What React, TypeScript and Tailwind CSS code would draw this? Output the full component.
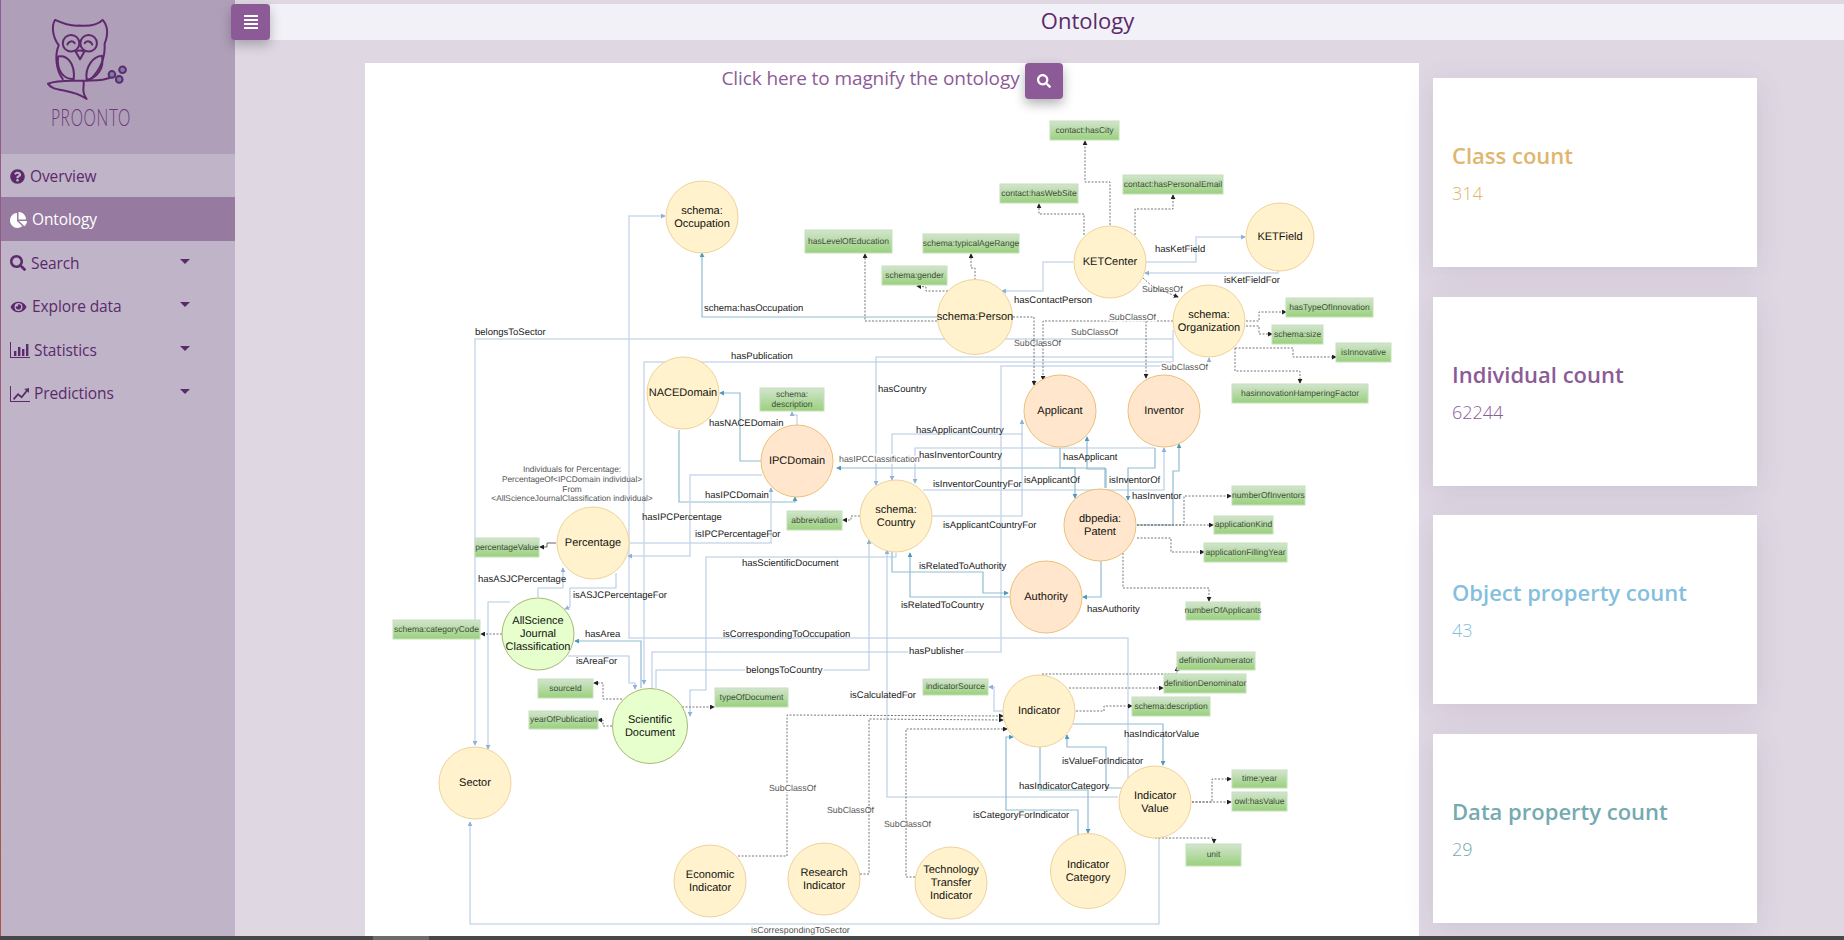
import { FaQuestionCircle, FaChartPie, FaSearch, FaEye, FaAlignJustify } from 'react-icons/fa'
import type { ReactNode } from 'react'

type Tone = 'teal' | 'light' | 'mid' | 'dash' | 'solid'

const nodes: { x: number; y: number; r?: number; fill?: 'peach' | 'green'; text: string[] }[] = [
  { x: 702, y: 217, text: ['schema:', 'Occupation'] },
  { x: 683, y: 393, text: ['NACEDomain'] },
  { x: 797, y: 461, fill: 'peach', text: ['IPCDomain'] },
  { x: 1110, y: 262, text: ['KETCenter'] },
  { x: 1280, y: 237, r: 34, text: ['KETField'] },
  { x: 975, y: 317, r: 37.5, text: ['schema:Person'] },
  { x: 1209, y: 321, text: ['schema:', 'Organization'] },
  { x: 1060, y: 411, fill: 'peach', text: ['Applicant'] },
  { x: 1164, y: 411, fill: 'peach', text: ['Inventor'] },
  { x: 1100, y: 525, fill: 'peach', text: ['dbpedia:', 'Patent'] },
  { x: 896, y: 516, text: ['schema:', 'Country'] },
  { x: 1046, y: 597, fill: 'peach', text: ['Authority'] },
  { x: 593, y: 543, text: ['Percentage'] },
  { x: 538, y: 634, fill: 'green', text: ['AllScience', 'Journal', 'Classification'] },
  { x: 650, y: 726, r: 37.5, fill: 'green', text: ['Scientific', 'Document'] },
  { x: 475, y: 783, text: ['Sector'] },
  { x: 710, y: 881, text: ['Economic', 'Indicator'] },
  { x: 824, y: 879, text: ['Research', 'Indicator'] },
  { x: 951, y: 883, text: ['Technology', 'Transfer', 'Indicator'] },
  { x: 1039, y: 711, text: ['Indicator'] },
  { x: 1155, y: 802, text: ['Indicator', 'Value'] },
  { x: 1088, y: 871, r: 37.5, text: ['Indicator', 'Category'] },
]

const boxes: [number, number, number, number, string[]][] = [
  [1050, 121, 1119, 140, ['contact:hasCity']],
  [1000, 184, 1078, 203, ['contact:hasWebSite']],
  [1123, 175, 1223, 194, ['contact:hasPersonalEmail']],
  [923, 234, 1019, 253, ['schema:typicalAgeRange']],
  [882, 266, 947, 285, ['schema:gender']],
  [805, 230, 892, 253, ['hasLevelOfEducation']],
  [1286, 298, 1373, 317, ['hasTypeOfInnovation']],
  [1272, 325, 1323, 344, ['schema:size']],
  [1336, 343, 1391, 362, ['isInnovative']],
  [1232, 384, 1368, 403, ['hasinnovationHamperingFactor']],
  [760, 388, 824, 411, ['schema:', 'description']],
  [1232, 486, 1305, 505, ['numberOfInventors']],
  [1214, 516, 1273, 534, ['applicationKind']],
  [1204, 543, 1287, 562, ['applicationFillingYear']],
  [1186, 602, 1260, 620, ['numberOfApplicants']],
  [787, 511, 842, 530, ['abbreviation']],
  [475, 538, 539, 557, ['percentageValue']],
  [393, 620, 480, 639, ['schema:categoryCode']],
  [538, 679, 593, 698, ['sourceId']],
  [529, 711, 598, 729, ['yearOfPublication']],
  [715, 688, 788, 707, ['typeOfDocument']],
  [1177, 652, 1255, 670, ['definitionNumerator']],
  [1164, 674, 1246, 693, ['definitionDenominator']],
  [923, 679, 988, 695, ['indicatorSource']],
  [1132, 697, 1210, 716, ['schema:description']],
  [1232, 770, 1287, 788, ['time:year']],
  [1232, 792, 1287, 811, ['owl:hasValue']],
  [1186, 844, 1241, 866, ['unit']],
]

const edges: [string, Tone][] = [
  ['938,317 702,317 702,253', 'teal'],
  ['1173,339 475,339 475,745', 'light'],
  ['1128,778 1128,638 629,638 629,216 665,216', 'light'],
  ['1173,330 1173,362 644,362 644,684', 'light'],
  ['1173,357 876,357 876,485', 'mid'],
  ['679,430 679,502 795,502 795,497', 'teal'],
  ['761,461 740,461 740,393 720,393', 'teal'],
  ['797,425 797,415 792,415 792,412', 'light'],
  ['629,543 771,543 771,488', 'light'],
  ['762,475 690,475 690,556 628,556', 'light'],
  ['1105,488 1105,468 837,468', 'teal'],
  ['1023,434 892,434 892,480', 'mid'],
  ['932,516 1022,516 1022,420', 'mid'],
  ['1155,448 915,448 915,483', 'mid'],
  ['923,490 1164,490 1164,448', 'mid'],
  ['1106,488 1106,469 1087,469 1087,437', 'teal'],
  ['1060,448 1060,468 1075,468 1075,498', 'teal'],
  ['1155,448 1155,468 1128,468 1128,500', 'teal'],
  ['1137,525 1173,525 1173,471 1179,471 1179,444', 'teal'],
  ['652,689 652,652 1001,652 1001,366 1209,366 1209,358', 'light'],
  ['656,688 656,670 869,670 869,540', 'mid'],
  ['896,553 896,557 706,557 706,690 690,690 690,716', 'mid'],
  ['1118,797 887,797 887,550', 'mid'],
  ['892,552 892,572 983,572 983,593 1008,593', 'teal'],
  ['1010,597 910,597 910,553', 'teal'],
  ['1101,561 1101,597 1083,597', 'teal'],
  ['641,688 641,641 575,641', 'teal'],
  ['568,656 629,656 629,683 635,683 635,689', 'mid'],
  ['538,597 538,588 563,588 563,568', 'mid'],
  ['616,573 616,588 570,588 570,607 565,609', 'mid'],
  ['510,602 488,602 488,749', 'mid'],
  ['1159,838 1159,924 470,924 470,822', 'mid'],
  ['1146,262 1196,262 1196,237 1245,237', 'light'],
  ['1278,271 1278,273 1145,273', 'light'],
  ['1073,262 1043,262 1043,291 1002,291', 'light'],
  ['1073,724 1163,724 1163,765', 'teal'],
  ['1122,788 1106,788 1106,747 1067,747 1067,735', 'teal'],
  ['1040,747 1040,790 1088,790 1088,833', 'teal'],
  ['1078,835 1078,810 1006,810 1006,737 1013,737', 'teal'],
  ['1003,711 994,711 994,687 989,687', 'light'],
  ['556,543 547,543 547,547 540,547', 'solid'],
  ['1110,225 1110,182 1085,182 1085,141', 'dash'],
  ['1084,235 1084,214 1039,214 1039,204', 'dash'],
  ['1135,235 1135,209 1173,209 1173,195', 'dash'],
  ['975,280 975,268 971,268 971,254', 'dash'],
  ['948,291 926,291 926,287 917,286', 'dash'],
  ['937,321 865,321 865,254', 'dash'],
  ['1013,317 1034,317 1034,385', 'dash'],
  ['1173,321 1043,321 1043,380', 'dash'],
  ['1146,321 1146,378', 'dash'],
  ['1143,278 1153,287 1178,297', 'dash'],
  ['1246,321 1259,321 1259,312 1286,312', 'dash'],
  ['1246,326 1259,326 1259,334 1272,334', 'dash'],
  ['1235,348 1293,348 1293,357 1336,357', 'dash'],
  ['1235,348 1235,371 1300,371 1300,383', 'dash'],
  ['1137,525 1184,525 1184,496 1231,496', 'dash'],
  ['1137,525 1213,525', 'dash'],
  ['1137,538 1171,538 1171,552 1204,552', 'dash'],
  ['1123,553 1123,588 1209,588 1209,601', 'dash'],
  ['860,516 851,516 851,520 843,520', 'dash'],
  ['502,634 481,634', 'dash'],
  ['622,699 603,699 603,683 594,683', 'dash'],
  ['612,726 603,726 603,720 598,720', 'dash'],
  ['682,707 714,707', 'dash'],
  ['1042,674 1177,674 1177,667', 'dash'],
  ['1069,688 1163,688', 'dash'],
  ['1076,711 1104,711 1104,706 1132,706', 'dash'],
  ['738,856 787,856 787,715 1003,716', 'dash'],
  ['860,874 869,874 869,719 1003,720', 'dash'],
  ['915,877 906,877 906,729 1007,729', 'dash'],
  ['1192,802 1212,802 1212,779 1231,779', 'dash'],
  ['1192,802 1231,802', 'dash'],
  ['1155,838 1214,838 1214,843', 'dash'],
]

// x, y, text, white backing, grey small label
const labels: [number, number, string, boolean?, boolean?][] = [
  [704, 308, 'schema:hasOccupation'],
  [475, 332, 'belongsToSector'],
  [731, 356, 'hasPublication', true],
  [878, 389, 'hasCountry'],
  [709, 423, 'hasNACEDomain'],
  [839, 459, 'hasIPCClassification', true, true],
  [705, 495, 'hasIPCDomain'],
  [642, 517, 'hasIPCPercentage'],
  [695, 534, 'isIPCPercentageFor'],
  [916, 430, 'hasApplicantCountry'],
  [919, 455, 'hasInventorCountry'],
  [933, 484, 'isInventorCountryFor'],
  [1024, 480, 'isApplicantOf'],
  [1063, 457, 'hasApplicant'],
  [1109, 480, 'isInventorOf'],
  [1132, 496, 'hasInventor'],
  [943, 525, 'isApplicantCountryFor'],
  [742, 563, 'hasScientificDocument'],
  [919, 566, 'isRelatedToAuthority'],
  [901, 605, 'isRelatedToCountry'],
  [1087, 609, 'hasAuthority'],
  [723, 634, 'isCorrespondingToOccupation'],
  [909, 651, 'hasPublisher', true],
  [746, 670, 'belongsToCountry', true],
  [850, 695, 'isCalculatedFor'],
  [1155, 249, 'hasKetField'],
  [1224, 280, 'isKetFieldFor'],
  [1014, 300, 'hasContactPerson'],
  [1142, 289, 'SublassOf', false, true],
  [1109, 317, 'SubClassOf', true, true],
  [1071, 332, 'SubClassOf', false, true],
  [1014, 343, 'SubClassOf', false, true],
  [1161, 367, 'SubClassOf', true, true],
  [478, 579, 'hasASJCPercentage'],
  [573, 595, 'isASJCPercentageFor'],
  [585, 634, 'hasArea'],
  [576, 661, 'isAreaFor'],
  [769, 788, 'SubClassOf', true, true],
  [827, 810, 'SubClassOf', false, true],
  [884, 824, 'SubClassOf', false, true],
  [751, 930, 'isCorrespondingToSector', true, true],
  [1124, 734, 'hasIndicatorValue'],
  [1062, 761, 'isValueForIndicator'],
  [1019, 786, 'hasIndicatorCategory'],
  [973, 815, 'isCategoryForIndicator'],
]

const note = [
  'Individuals for Percentage:',
  'PercentageOf<IPCDomain individual>',
  'From',
  '<AllScienceJournalClassification individual>',
]

const toneClass: Record<Tone, string> = {
  teal: 'stroke-[#8fbdd3] stroke-[1.2]',
  light: 'stroke-[#cbd9ec] stroke-[1.5]',
  mid: 'stroke-[#b4cae4] stroke-[1.1]',
  dash: 'stroke-[#777777] stroke-1 [stroke-dasharray:2_1.5]',
  solid: 'stroke-[#666666] stroke-1',
}

const toneMarker: Record<Tone, string> = {
  teal: 'url(#arrow-teal)',
  light: 'url(#arrow-light)',
  mid: 'url(#arrow-light)',
  dash: 'url(#arrow-dark)',
  solid: 'url(#arrow-dark)',
}

const nodeFill = {
  plain: 'fill-[#fff2cc] stroke-[#eed39a]',
  peach: 'fill-[#ffe6cc] stroke-[#ecc07a]',
  green: 'fill-[#e6ffcc] stroke-[#a9b878]',
}

function Marker({ id, color }: { id: string; color: string }) {
  return (
    <marker id={id} viewBox="0 0 6 6" refX="5" refY="3" markerWidth="5" markerHeight="5" markerUnits="userSpaceOnUse" orient="auto">
      <path d="M0 0 L6 3 L0 6 Z" fill={color} />
    </marker>
  )
}

function OntologyDiagram() {
  return (
    <svg viewBox="365 99 1054 837" className="block w-[1054px] h-[837px] font-['Liberation_Sans',Arial,sans-serif] [text-rendering:geometricPrecision]">
      <defs>
        <linearGradient id="box-green" x1="0" y1="0" x2="0" y2="1">
          <stop offset="0%" stopColor="#d3e4cf" />
          <stop offset="100%" stopColor="#99d17c" />
        </linearGradient>
        <Marker id="arrow-teal" color="#4f98bd" />
        <Marker id="arrow-light" color="#8fb0d8" />
        <Marker id="arrow-dark" color="#222222" />
      </defs>

      {edges.map(([points, tone], i) => (
        <polyline key={i} points={points} fill="none" className={toneClass[tone]} markerEnd={toneMarker[tone]} />
      ))}

      {nodes.map(n => (
        <g key={n.text.join('')}>
          <circle cx={n.x} cy={n.y} r={n.r ?? 36} className={`${nodeFill[n.fill ?? 'plain']} stroke-1`} />
          {n.text.map((line, i) => (
            <text
              key={line}
              x={n.x}
              y={n.y + (i - (n.text.length - 1) / 2) * 13}
              textAnchor="middle"
              dominantBaseline="central"
              className="fill-[#111111] text-[11px]"
            >
              {line}
            </text>
          ))}
        </g>
      ))}

      {boxes.map(([x1, y1, x2, y2, text]) => (
        <g key={`${x1}-${y1}`}>
          <rect x={x1} y={y1} width={x2 - x1} height={y2 - y1} fill="url(#box-green)" className="stroke-[#c6e0bb] stroke-1" />
          {text.map((line, i) => (
            <text
              key={line}
              x={(x1 + x2) / 2}
              y={(y1 + y2) / 2 - 1 + (i - (text.length - 1) / 2) * 10}
              textAnchor="middle"
              dominantBaseline="central"
              className="fill-[#3f4f3a] text-[8.5px]"
            >
              {line}
            </text>
          ))}
        </g>
      ))}

      {labels.map(([x, y, text, backed, grey]) => (
        <text
          key={`${x}-${y}`}
          x={x}
          y={y}
          dominantBaseline="central"
          paintOrder="stroke"
          className={`${grey ? 'fill-[#555555] text-[8.8px]' : 'fill-[#222222] text-[9.5px]'} ${backed ? 'stroke-white stroke-[3]' : ''}`}
        >
          {text}
        </text>
      ))}

      {note.map((line, i) => (
        <text key={line} x={572} y={469 + i * 9.8} textAnchor="middle" dominantBaseline="central" className="fill-[#555555] text-[8.3px]">
          {line}
        </text>
      ))}
    </svg>
  )
}

function ProontoLogo() {
  return (
    <svg viewBox="0 0 360 280" className="block w-[120px] h-[93px]" fill="none" stroke="#5f2a6d" strokeWidth="6" strokeLinecap="round" strokeLinejoin="round">
      <path d="M75 30 C92 38 118 50 148 47 C176 49 202 46 218 30 C232 46 236 72 224 102 C226 140 212 180 180 210" />
      <path d="M75 30 C64 46 66 80 86 106 C74 134 76 178 98 208" />
      <circle cx="123" cy="100" r="25" />
      <circle cx="176" cy="100" r="25" />
      <path d="M112 104 C116 92 128 92 134 100" />
      <path d="M164 100 C170 92 182 92 187 104" />
      <path d="M137 126 L150 148 L163 126 Q150 118 137 126 Z" />
      <path d="M84 140 C110 134 136 160 131 208 C100 210 78 180 84 140 Z" />
      <path d="M216 138 C190 140 164 170 170 210 C200 206 224 176 216 138 Z" />
      <path d="M54 222 C90 208 130 216 180 212 C205 212 232 212 250 198" />
      <path d="M54 222 C66 248 122 234 170 268 C150 242 166 226 160 214" />
      <circle cx="246" cy="194" r="10" fill="#6f83ad" />
      <circle cx="278" cy="180" r="10" fill="#6f83ad" />
      <circle cx="268" cy="209" r="10" fill="#6f83ad" />
    </svg>
  )
}

function BarsIcon() {
  return (
    <svg viewBox="0 0 20 16" className="w-[20px] h-[16px]" fill="currentColor">
      <path d="M0 0 h1 v15 h19 v1 h-20 z" />
      <rect x="4" y="9" width="2.4" height="5" />
      <rect x="8" y="5" width="2.4" height="9" />
      <rect x="12" y="7" width="2.4" height="7" />
      <rect x="16" y="2" width="2.4" height="12" />
    </svg>
  )
}

function LineIcon() {
  return (
    <svg viewBox="0 0 20 16" className="w-[20px] h-[16px]" fill="currentColor">
      <path d="M0 0 h1 v15 h19 v1 h-20 z" />
      <path d="M3 12.5 L8 7 L11.5 10 L16 4.5 L14.2 3 L19 2 L19 7 L17.4 5.6 L11.7 12.6 L8.2 9.6 L4.2 14 Z" />
    </svg>
  )
}

const menu: { label: string; icon: ReactNode; gap: string; caret?: boolean; active?: boolean }[] = [
  { label: 'Overview', icon: <FaQuestionCircle className="w-[15px] h-[15px]" />, gap: 'gap-[5px]' },
  { label: 'Ontology', icon: <FaChartPie className="w-[17px] h-[16px]" />, gap: 'gap-[5px]', active: true },
  { label: 'Search', icon: <FaSearch className="w-[16px] h-[16px]" />, gap: 'gap-[5px]', caret: true },
  { label: 'Explore data', icon: <FaEye className="w-[17px] h-[14px]" />, gap: 'gap-[5px]', caret: true },
  { label: 'Statistics', icon: <BarsIcon />, gap: 'gap-[4px]', caret: true },
  { label: 'Predictions', icon: <LineIcon />, gap: 'gap-[4px]', caret: true },
]

const stats = [
  { title: 'Class count', value: '314', color: 'text-[#e0b66e]' },
  { title: 'Individual count', value: '62244', color: 'text-[#8c5b97]' },
  { title: 'Object property count', value: '43', color: 'text-[#85bfdd]' },
  { title: 'Data property count', value: '29', color: 'text-[#75aab0]' },
]

export default function App() {
  return (
    <div className="relative w-[1844px] h-[940px] overflow-hidden flex flex-col bg-[#dfd8e3] font-['Open_Sans',sans-serif]">
      <div className="flex flex-1 min-h-0">
        {/* sidebar */}
        <aside className="w-[235px] shrink-0 flex">
          <div className="w-px bg-gradient-to-b from-[#8c5b97] to-[#b0553f]" />
          <div className="flex-1 flex flex-col bg-[#c0b4c8]">
            <div className="h-[154px] bg-[#b09fb9] pl-[29px] pt-[10px]">
              <ProontoLogo />
              <div className="pl-[21px] mt-[2px] h-[24px] font-['Lato',sans-serif] font-light text-[23.5px] leading-[24px] tracking-[1px] text-[#6a3a78]">
                <span className="inline-block origin-left scale-x-[0.66]">PROONTO</span>
              </div>
            </div>
            {menu.map(item => (
              <div
                key={item.label}
                className={`h-[43.4px] flex items-center pl-[9px] pt-[2px] text-[15.5px] ${item.active ? 'bg-[#977aa0] text-white' : 'text-[#5b2a6b]'} ${item.gap}`}
              >
                <span className="shrink-0">{item.icon}</span>
                <span className="tracking-[-0.1px]">{item.label}</span>
                {item.caret && (
                  <span className="ml-auto mr-[45px] -mt-[4px] w-0 h-0 border-x-[5px] border-x-transparent border-t-[5px] border-t-[#5b2a6b]" />
                )}
              </div>
            ))}
          </div>
        </aside>

        {/* main column */}
        <main className="flex-1 min-w-0 flex flex-col">
          <header className="mt-[4px] ml-[35px] h-[36px] bg-[#f2f1f7] flex items-center justify-center pl-[61px] pb-[3px] text-[22px] text-[#5b2a6b]">
            Ontology
          </header>
          <div className="flex-1 min-h-0 flex pl-[130px] pt-[23px] gap-[14px]">
            <section className="w-[1054px] bg-white flex flex-col">
              <div className="h-[36px] flex items-start justify-center gap-[5px]">
                <span className="text-[19px] leading-[30px] tracking-[-0.1px] text-[#8c5b97]">Click here to magnify the ontology</span>
                <button className="w-[38px] h-[36px] rounded bg-[#8c5b97] text-white flex items-center justify-center shadow-[0_5px_12px_rgba(0,0,0,0.3)]">
                  <FaSearch className="w-[14px] h-[14px]" />
                </button>
              </div>
              <OntologyDiagram />
            </section>
            <div className="w-[324px] pt-[15px] flex flex-col gap-[29.6px]">
              {stats.map(s => (
                <div key={s.title} className={`h-[189px] bg-white px-[19px] pb-[1px] flex flex-col justify-center shadow-[0_6px_28px_rgba(90,60,110,0.12)] ${s.color}`}>
                  <div className="text-[22px] leading-[32px] font-semibold">{s.title}</div>
                  <div className="mt-[10px] text-[18px] leading-[24px] font-light">{s.value}</div>
                </div>
              ))}
            </div>
          </div>
        </main>
      </div>

      {/* menu toggle */}
      <button className="absolute left-[231px] top-[4px] w-[39px] h-[36px] rounded bg-[#8c5b97] text-white flex items-center justify-center shadow-[0_5px_12px_rgba(0,0,0,0.25)]">
        <FaAlignJustify className="w-[16px] h-[16px]" />
      </button>

      {/* strip along the bottom edge */}
      <div className="h-[4px] shrink-0 bg-[#484848] flex">
        <div className="ml-[373px] w-[56px] bg-[#6b6b6b]" />
      </div>
    </div>
  )
}
